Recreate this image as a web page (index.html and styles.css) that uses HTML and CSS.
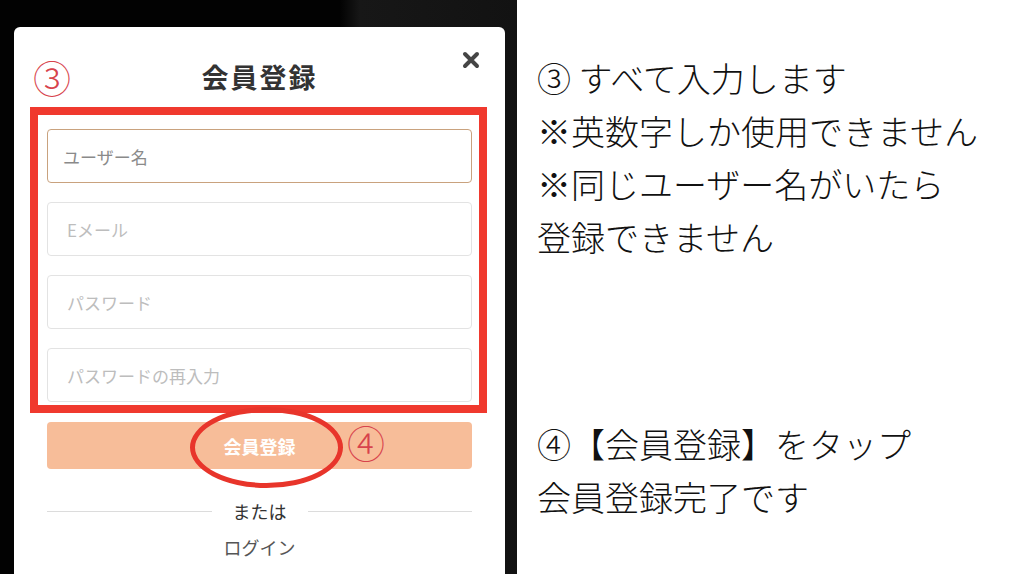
FILE: index.html
```html
<!DOCTYPE html>
<html lang="ja">
<head>
    <meta charset="UTF-8">
    <meta name="viewport" content="width=device-width, initial-scale=1.0">
    <title>会員登録の手順</title>
    <link rel="stylesheet" href="styles.css">
</head>
<body>
    <div class="phone">
        <div class="modal">
            <span class="step-mark step-3">③</span>
            <a href="#" class="close-btn" aria-label="閉じる">
                <svg width="18" height="18" viewBox="0 0 18 18">
                    <path d="M3 3 L15 15 M15 3 L3 15" stroke="#454545" stroke-width="4" stroke-linecap="round"/>
                </svg>
            </a>

            <h2 class="modal-title">会員登録</h2>

            <form class="signup-form">
                <div class="fields">
                    <input type="text" class="focused" placeholder="ユーザー名">
                    <input type="email" placeholder="Eメール">
                    <input type="password" placeholder="パスワード">
                    <input type="password" placeholder="パスワードの再入力">
                    <span class="mark-box"></span>
                </div>

                <div class="submit-row">
                    <button type="submit">会員登録</button>
                    <span class="mark-ellipse"></span>
                    <span class="step-mark step-4">④</span>
                </div>
            </form>

            <div class="divider"><span>または</span></div>
            <a href="#" class="login-link">ログイン</a>
        </div>
    </div>

    <div class="notes">
        <p class="note note-top">③ すべて入力します<br>※英数字しか使用できません<br>※同じユーザー名がいたら<br>登録できません</p>
        <p class="note note-bottom">④【会員登録】をタップ<br>会員登録完了です</p>
    </div>
</body>
</html>
```

FILE: styles.css
```css
/* Base */
html, body {
    height: 100%;
}
body {
    margin: 0;
    display: flex;
    background-color: #fff;
    font-family: "Noto Sans CJK JP", "Noto Sans", sans-serif;
    color: #333;
    overflow: hidden;
}

/* Phone screenshot area */
.phone {
    width: 517px;
    flex-shrink: 0;
    box-sizing: border-box;
    padding: 27px 12px 0 14px;
    background: linear-gradient(90deg, #020202 0, #020202 340px, #171717 360px, #121212 100%);
    display: flex;
}
.modal {
    position: relative;
    flex: 1;
    background-color: #fff;
    border-radius: 6px 6px 0 0;
    padding: 0 33px;
}

.close-btn {
    position: absolute;
    top: 24px;
    right: 25px;
    display: block;
    width: 18px;
    height: 18px;
}
.close-btn svg {
    display: block;
}

.modal-title {
    margin: 0;
    padding-top: 34px;
    height: 32px;
    line-height: 32px;
    text-align: center;
    font-size: 27px;
    font-weight: 700;
    letter-spacing: 2px;
    color: #333;
}

/* Form */
.signup-form {
    margin-top: 36px;
}
.fields {
    position: relative;
    display: flex;
    flex-direction: column;
    gap: 19px;
}
.fields input {
    height: 54px;
    box-sizing: border-box;
    padding: 0 19px;
    border: 1px solid #e3e3e3;
    border-radius: 4px;
    font-family: inherit;
    font-size: 17px;
    color: #333;
    outline: none;
}
.fields input::placeholder {
    color: #bdbdbd;
}
.fields input.focused {
    border-color: #c9a27e;
    padding-left: 15px;
}
.fields input.focused::placeholder {
    color: #8a8a8a;
}

.submit-row {
    position: relative;
    margin-top: 20px;
}
.submit-row button {
    display: block;
    width: 100%;
    height: 47px;
    border: none;
    border-radius: 4px;
    background-color: #f7bd99;
    color: #fff;
    font-family: inherit;
    font-size: 18px;
    font-weight: 700;
    cursor: pointer;
}

.divider {
    display: flex;
    align-items: center;
    margin-top: 30px;
    font-size: 18px;
    line-height: 24px;
    color: #333;
}
.divider::before, .divider::after {
    content: "";
    flex: 1;
    height: 1px;
    background-color: #dcdcdc;
}
.divider span {
    padding: 0 21px;
}

.login-link {
    display: block;
    margin-top: 12px;
    text-align: center;
    font-size: 18px;
    line-height: 24px;
    color: #555;
    text-decoration: none;
}

/* Red annotation marks */
.step-mark {
    position: absolute;
    font-size: 38px;
    font-weight: 300;
    line-height: 1;
    color: #d7434c;
}
.step-3 {
    left: 19px;
    top: 31px;
}
.step-4 {
    left: 300px;
    top: 1px;
}
.mark-box {
    position: absolute;
    top: -22px;
    bottom: -11px;
    left: -17px;
    right: -15px;
    border: 8px solid #f0392e;
    pointer-events: none;
}
.mark-ellipse {
    position: absolute;
    left: 143px;
    top: -15px;
    width: 153px;
    height: 81px;
    box-sizing: border-box;
    border: 5px solid #e8352b;
    border-radius: 50%;
    pointer-events: none;
}

/* Explanation text */
.notes {
    flex: 1;
    padding-left: 20px;
    color: #111;
    font-size: 34px;
    font-weight: 300;
    line-height: 53px;
}
.note {
    margin: 0;
}
.note-top {
    margin-top: 51px;
}
.note-bottom {
    margin-top: 154px;
}
```
